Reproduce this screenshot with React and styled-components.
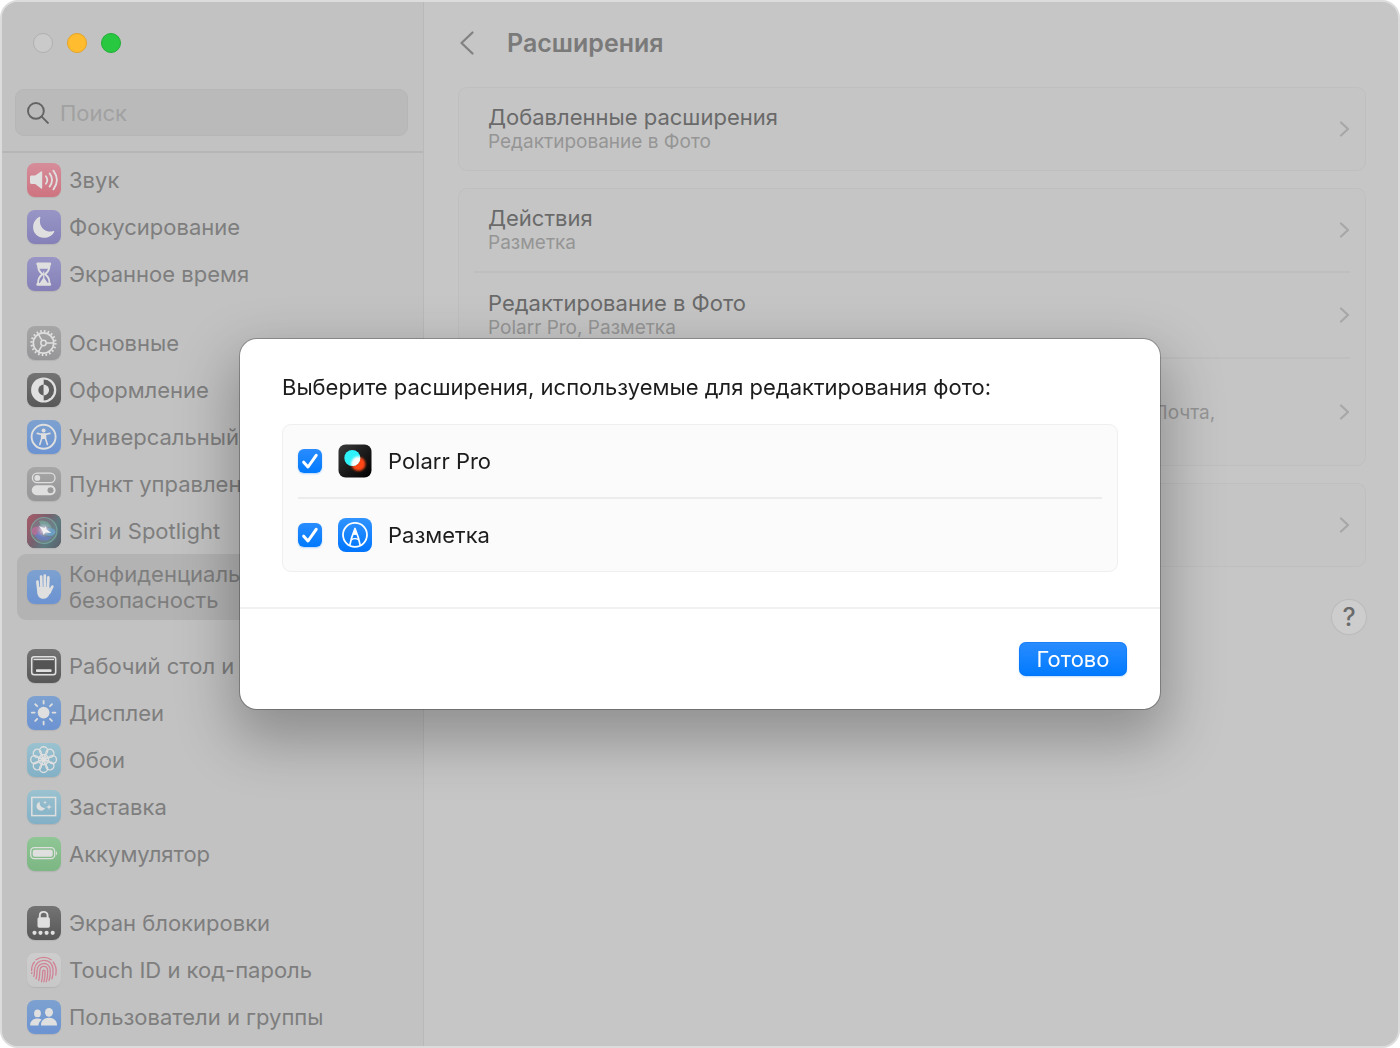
import React, { useState } from "react";
import styled, { createGlobalStyle, css } from "styled-components";

const GlobalStyle = createGlobalStyle`
  *, *::before, *::after { box-sizing: border-box; }
  body {
    margin: 0;
    background: #fff;
    font-family: Inter, "Noto Sans", sans-serif;
    font-size: 22px;
    line-height: 26px;
  }
  button, input { font: inherit; }
  h1, h2, p, ul { margin: 0; padding: 0; }
`;

/* ---------- window ---------- */

const Window = styled.div`
  display: grid;
  grid-template-columns: 422px minmax(0, 1fr);
  min-height: 100vh;
  border: 2px solid #dcdcdc;
  border-radius: 18px;
  background: #c6c6c6;
  overflow: hidden;
`;

const Sidebar = styled.aside`
  display: flex;
  flex-direction: column;
  background: #c2c2c2;
  border-right: 1px solid #b9b9b9;
`;

const SidebarTop = styled.div`
  display: flex;
  flex-direction: column;
  gap: 36px;
  padding: 31px 15px 15px 13px;
  border-bottom: 2px solid #b6b6b6;
`;

const Lights = styled.div`
  display: flex;
  gap: 14px;
  padding-left: 18px;
`;

const Light = styled.button`
  width: 20px;
  height: 20px;
  padding: 0;
  border: 1px solid ${(p) => p.$edge};
  border-radius: 50%;
  background: ${(p) => p.$fill};
`;

const Search = styled.label`
  display: flex;
  align-items: center;
  gap: 11px;
  height: 47px;
  padding: 0 11px;
  border: 1px solid #b6b6b6;
  border-radius: 9px;
  background: #bababa;
`;

const SearchInput = styled.input`
  flex: 1;
  min-width: 0;
  padding: 0;
  border: 0;
  outline: 0;
  background: none;
  color: #6d6d6d;
  &::placeholder { color: #a1a1a1; opacity: 1; }
`;

const Nav = styled.nav`
  display: flex;
  flex-direction: column;
  gap: 22px;
  padding: 3px 15px 6px;
`;

const Group = styled.ul`
  list-style: none;
`;

const Item = styled.button`
  display: flex;
  align-items: center;
  gap: 8px;
  width: 100%;
  min-height: 47px;
  padding: 0 10px;
  border: 0;
  border-radius: 9px;
  background: none;
  color: #7e7e7e;
  text-align: left;
  ${(p) =>
    p.$selected &&
    css`
      min-height: 66px;
      background: #b3b3b3;
    `}
`;

const tones = {
  red: ["#d68d9a", "#cf7380"],
  purple: ["#9895c6", "#8581b8"],
  grey: ["#a6a6a7", "#969698"],
  black: ["#737373", "#585858"],
  blue: ["#7da1d0", "#6c93d2"],
  cyan: ["#9ac2d0", "#82b0c6"],
  green: ["#8fc695", "#7cb683"],
  white: ["#cdcdcd", "#c8c8c8"],
  siri: ["#777", "#555"],
};

const Tile = styled.span`
  display: flex;
  flex: none;
  width: 34px;
  height: 34px;
  border-radius: 8px;
  overflow: hidden;
  background: linear-gradient(${(p) => tones[p.$tone][0]}, ${(p) => tones[p.$tone][1]});
  box-shadow: 0 1px 1px rgba(0, 0, 0, 0.08);
`;

/* ---------- main pane ---------- */

const Main = styled.main`
  display: flex;
  flex-direction: column;
  gap: 17px;
  padding: 23px 32px 34px 34px;
`;

const Header = styled.header`
  display: flex;
  align-items: center;
  gap: 31px;
  height: 36px;
  margin-bottom: 9px;
`;

const Back = styled.button`
  display: flex;
  padding: 0;
  border: 0;
  background: none;
`;

const Title = styled.h1`
  font-size: 25px;
  line-height: 32px;
  font-weight: 600;
  color: #7a7a7a;
`;

const Card = styled.section`
  border: 1px solid #bfbfbf;
  border-radius: 9px;
  background: #c5c5c5;
  padding: 0 15px;
`;

const CardRow = styled.button`
  display: flex;
  align-items: center;
  justify-content: space-between;
  width: 100%;
  min-height: 82px;
  padding: 16px 0 16px 14px;
  border: 0;
  background: none;
  text-align: left;
  & + & {
    border-top: 2px solid #bfbfbf;
    min-height: 86px;
  }
`;

const RowText = styled.span`
  display: flex;
  flex-direction: column;
`;

const RowTitle = styled.span`
  min-height: 26px;
  color: #6a6a6a;
`;

const RowSub = styled.span`
  font-size: 19px;
  line-height: 24px;
  color: #959595;
`;

const Help = styled.button`
  align-self: flex-end;
  width: 34px;
  height: 34px;
  margin-top: 16px;
  padding: 0;
  border: 0;
  border-radius: 50%;
  background: #cdcdcd;
  box-shadow: 0 0 1px 1px rgba(0, 0, 0, 0.06);
  color: #6a6a6a;
  font-size: 25px;
  line-height: 34px;
  font-weight: 500;
`;

/* ---------- dialog ---------- */

const Overlay = styled.div`
  position: fixed;
  inset: 0;
  display: grid;
  place-items: center;
  padding: 24px;
`;

const Dialog = styled.div`
  width: 100%;
  max-width: 920px;
  border-radius: 17px;
  background: #fff;
  box-shadow: 0 0 0 1px rgba(0, 0, 0, 0.26), 0 24px 56px 8px rgba(0, 0, 0, 0.27);
`;

const DialogBody = styled.div`
  display: flex;
  flex-direction: column;
  gap: 24px;
  padding: 35px 42px;
`;

const DialogTitle = styled.h2`
  font-size: 22px;
  line-height: 26px;
  font-weight: 400;
  color: #1d1d1d;
`;

const Options = styled.div`
  border: 1px solid #efefef;
  border-radius: 9px;
  background: #fbfbfb;
  padding: 0 15px;
`;

const Option = styled.label`
  display: flex;
  align-items: center;
  gap: 16px;
  height: 72px;
  color: #1d1d1d;
  & + & {
    height: 74px;
    border-top: 2px solid #ececec;
  }
`;

const CheckBox = styled.span`
  display: grid;
  width: 24px;
  height: 24px;
  & > * { grid-area: 1 / 1; }
`;

const CheckInput = styled.input`
  appearance: none;
  width: 24px;
  height: 24px;
  margin: 0;
  border: 1px solid #c8c8c8;
  border-radius: 6px;
  background: #fff;
  &:checked {
    border: 0;
    background: linear-gradient(#2a8cff, #007aff);
    box-shadow: 0 1px 2px rgba(0, 122, 255, 0.3);
  }
  & + svg { visibility: hidden; pointer-events: none; }
  &:checked + svg { visibility: visible; }
`;

const DialogFooter = styled.div`
  display: flex;
  justify-content: flex-end;
  padding: 33px;
  border-top: 2px solid #f1f1f1;
`;

const Done = styled.button`
  height: 34px;
  width: 108px;
  padding: 0;
  border: 0;
  border-radius: 7px;
  background: linear-gradient(#2a8cff, #007aff);
  box-shadow: inset 0 0 0 1px rgba(0, 110, 240, 0.4), 0 1px 2px rgba(0, 122, 255, 0.25);
  color: #fff;
  line-height: 34px;
`;

/* ---------- drawings ---------- */

const W = "#dfdfdf";
const EIGHTHS = [0, 45, 90, 135, 180, 225, 270, 315];

const Glyph = ({ children }) => (
  <svg width="34" height="34" viewBox="0 0 34 34" fill="none" aria-hidden="true">
    {children}
  </svg>
);

const glyphs = {
  sound: (
    <>
      <path d="M4.6 12.6h3.6L14 8.4c.6-.4 1.2-.1 1.2.6v16c0 .7-.6 1-1.2.6l-5.8-4.7H4.6C3.6 20.9 3 20.3 3 19.3v-5.1c0-1 .6-1.6 1.6-1.6z" fill={W} />
      <path d="M18.9 13.2Q21.7 17 18.9 20.8M22.6 10.4Q27.6 17 22.6 23.600M26.4 7.6Q33.4 17 26.4 26.4" stroke={W} strokeWidth="1.8" strokeLinecap="round" />
    </>
  ),
  moon: (
    <path d="M12.6 6.8c.6-.3 1 .1.8.7-1.3 4.5 0 9.3 3.6 12 2.9 2.1 6.2 2.5 9.4 1.5.7-.2 1.1.3.8.9-2 3.6-5.9 5.900-10.300 5.900C10.900 27.800 6.100 23.200 6.100 17.300c0-4.700 2.600-8.600 6.500-10.500z" fill={W} />
  ),
  hourglass: (
    <>
      <path d="M10.2 5.600h13.100c1.200 0 1.200 2.800 0 2.800H10.200c-1.200 0-1.200-2.800 0-2.800zM10.200 26h13.100c1.200 0 1.200 2.800 0 2.800H10.200c-1.200 0-1.200-2.800 0-2.800z" fill={W} />
      <path d="M11 7.500c0 5.200 1.300 6.900 4.400 9.700-3.100 2.800-4.400 4.500-4.400 9.700M22.500 7.500c0 5.200-1.300 6.900-4.400 9.700 3.100 2.800 4.400 4.500 4.400 9.700" stroke={W} strokeWidth="1.900" />
      <path d="M11 7.500h11.500l-.6 4.300h-10.300zM16.750 20.200l4.400 6.300h-8.800z" fill={W} />
      <path d="M16.750 14.500v7" stroke={W} strokeWidth="1.200" />
    </>
  ),
  gear: (
    <>
      <circle cx="16.5" cy="17" r="10.200" stroke={W} strokeWidth="1.700" />
      <circle cx="16.5" cy="17" r="12" stroke={W} strokeWidth="2.200" strokeDasharray="1.700 2.070" />
      <circle cx="16.5" cy="17" r="2.700" stroke={W} strokeWidth="1.500" />
      <path d="M19.200 17h7M15.100 14.700l-3.600-6.300M15.100 19.300l-3.600 6.300" stroke={W} strokeWidth="1.500" />
    </>
  ),
  appearance: (
    <>
      <circle cx="16.700" cy="17" r="12.600" fill={W} />
      <path d="M16.700 6.600a10.400 10.400 0 0 1 0 20.800z" fill="#5f5f5f" />
      <path d="M16.700 11.600a5.400 5.400 0 0 0 0 10.800z" fill="#5f5f5f" />
      <path d="M16.700 11.600a5.400 5.400 0 0 1 0 10.800z" fill={W} />
    </>
  ),
  access: (
    <>
      <circle cx="16.600" cy="16.800" r="12" stroke={W} strokeWidth="1.900" />
      <circle cx="16.600" cy="10.400" r="2" fill={W} />
      <path d="M10.300 13.400l4.900 1.100h2.800l4.900-1.100" stroke={W} strokeWidth="1.600" strokeLinecap="round" strokeLinejoin="round" />
      <path d="M14.700 14h3.800v4.600l1.900 6M14.700 14v4.600l-1.900 6" stroke={W} strokeWidth="1.600" strokeLinecap="round" strokeLinejoin="round" />
      <path d="M14.700 14h3.800v5h-3.800z" fill={W} />
    </>
  ),
  toggles: (
    <>
      <rect x="5.400" y="6.200" width="22.600" height="9.400" rx="4.700" stroke={W} strokeWidth="1.300" />
      <circle cx="10.300" cy="10.900" r="2.900" fill={W} />
      <rect x="4.800" y="18.200" width="23.800" height="10" rx="5" fill={W} />
      <circle cx="23.500" cy="23.200" r="3" fill="#9a9a9b" />
    </>
  ),
  siri: (
    <>
      <defs>
        <linearGradient id="siriBase" x1="0" y1=".2" x2="1" y2=".8">
          <stop offset="0" stopColor="#a35a68" />
          <stop offset=".4" stopColor="#77606e" />
          <stop offset=".7" stopColor="#5b7a80" />
          <stop offset="1" stopColor="#5c6470" />
        </linearGradient>
        <radialGradient id="siriGlow">
          <stop offset="0" stopColor="#f0f0f0" />
          <stop offset=".35" stopColor="#c9c4d8" stopOpacity=".8" />
          <stop offset="1" stopColor="#8aa4c8" stopOpacity="0" />
        </radialGradient>
      </defs>
      <rect width="34" height="34" fill="url(#siriBase)" />
      <circle cx="17" cy="16.500" r="13" fill="#778a96" fillOpacity=".5" stroke="#7db5a6" strokeOpacity=".7" strokeWidth="1.200" />
      <ellipse cx="10.500" cy="17" rx="6" ry="4.500" fill="#bd6f9b" fillOpacity=".75" />
      <ellipse cx="23" cy="18" rx="5.500" ry="4" fill="#6ba5d0" fillOpacity=".8" />
      <path d="M8 22c5 6 13 6 17 0-5 2-10 1-13-5z" fill="#6a7fd0" fillOpacity=".7" />
      <path d="M12 7c6-2 12 2 13 8-4-3-8-3-10 1z" fill="#74b79d" fillOpacity=".6" />
      <circle cx="17" cy="16" r="8" fill="url(#siriGlow)" />
      <path d="M12 12l5 2 2-1.500.5 3 5 3.500-6-.5-2 2.500-1-4z" fill="#f0f0f0" />
    </>
  ),
  hand: (
    <>
      <path d="M10.400 11.500l.9 8M14.100 6.600l.4 11M17.800 5.500v12M21.400 7.400l-.5 11M25.400 16.600c-1 1.500-1.800 3.800-2.900 6" stroke={W} strokeWidth="2.700" strokeLinecap="round" />
      <path d="M10 17h12.200l1.600 3.600c-1 3.800-2.600 8.200-7.200 8.200-4.200 0-6.100-2.600-6.500-6.800z" fill={W} />
    </>
  ),
  desktop: (
    <>
      <rect x="4.700" y="7.700" width="24" height="18" rx="2.500" stroke={W} strokeWidth="1.500" />
      <path d="M6.500 10.400h20.500" stroke={W} strokeWidth="1.300" />
      <rect x="6.500" y="12" width="20.500" height="12" rx="1" fill="#545454" />
      <rect x="9" y="20.300" width="15.600" height="2.800" rx=".8" fill={W} />
    </>
  ),
  sun: (
    <>
      <circle cx="16.600" cy="16.600" r="5.900" fill={W} />
      {EIGHTHS.map((a) => (
        <path key={a} d="M16.600 4.800v2.800" stroke={W} strokeWidth="1.800" strokeLinecap="round" transform={`rotate(${a} 16.600 16.600)`} />
      ))}
    </>
  ),
  flower: (
    <>
      {EIGHTHS.map((a) => (
        <g key={a} transform={`rotate(${a} 16.600 16.600)`} stroke={W}>
          <circle cx="16.600" cy="7.700" r="4" strokeWidth="1.400" />
          <path d="M15.300 11.700L16.600 16.600l1.300-4.900" strokeWidth="1.100" />
        </g>
      ))}
      <circle cx="16.600" cy="16.600" r="2.300" fill={W} />
    </>
  ),
  saver: (
    <>
      <rect x="4.800" y="7.400" width="23.800" height="18.200" stroke={W} strokeWidth="1.500" />
      <path d="M12.900 11.800c-.9 3.500 1.800 6.700 5.400 6-1 2-2.500 2.900-4.300 2.900-2.500 0-4.500-2-4.500-4.400 0-2 1.300-3.700 3.400-4.500z" fill={W} />
      <path d="M18 10.500l.5 1.500 1.500.5-1.500.5-.5 1.500-.5-1.500-1.500-.5 1.500-.5zM22 14l.7 2.300 2.300.7-2.300.7L22 20l-.7-2.300L19 17l2.300-.7z" fill={W} />
    </>
  ),
  battery: (
    <>
      <rect x="3.700" y="10.700" width="24" height="11" rx="3.600" stroke={W} strokeWidth="1.300" />
      <rect x="5.700" y="12.700" width="20" height="7" rx="2" fill={W} />
      <path d="M29 14.200c1.300.4 1.300 3.600 0 4z" fill={W} />
    </>
  ),
  lock: (
    <>
      <rect x="10.500" y="11.300" width="12.400" height="10.400" rx="1.700" fill={W} />
      <path d="M12.800 12V9.400c0-4.700 7.800-4.700 7.800 0V12" stroke={W} strokeWidth="1.900" />
      {[7.5, 13.5, 19.6, 25.7].map((x) => (
        <circle key={x} cx={x} cy="26.800" r="2.100" fill={W} />
      ))}
    </>
  ),
  touch: (
    <g stroke="#d18295" strokeWidth="1.300" strokeLinecap="round">
      <path d="M9 6.800C13.500 3.600 20 3.600 24.200 6.800M26.200 9c3 3.800 3.500 8 2.600 13" />
      <path d="M4.600 17.500C4.600 13.500 5.600 11 7.500 9M4.600 20.500c.3-.8.3-1 .3-1" />
      <path d="M6.800 23.500c1-2.600.4-5 .8-7.500C9 4.800 24.800 4.200 26 15.800c.3 3.800 0 6.700-1 10" />
      <path d="M9 25.800c1.200-3 .9-5.800 1.100-8.500C10.700 8.500 22.500 8.200 23.200 16.800c.3 4 0 7.200-1.200 10.800" />
      <path d="M11.700 27.500c1.100-3.200 1-6.500 1.100-9.500.3-6.200 7.700-6.200 7.900 0 .1 4-.3 7.500-1.500 10.800" />
      <path d="M14.500 28.800c1-3 1.200-6.500 1.200-10.200 0-2 2.400-2 2.400 0 0 3.800-.2 7-1.200 10.200" />
    </g>
  ),
  users: (
    <>
      <ellipse cx="10.500" cy="13.400" rx="3.400" ry="3.900" fill={W} />
      <path d="M3.200 25.600c-.3-4.300 3-7 7.300-7 1.600 0 3 .4 4.200 1.200-2 1.500-3.100 3.400-3.200 5.800z" fill={W} />
      <ellipse cx="22" cy="12.300" rx="4" ry="4.400" fill={W} />
      <path d="M14 25.600c-.4-4.600 3.200-7.800 8-7.800s8.400 3.200 8 7.800z" fill={W} />
    </>
  ),
};

const SearchIcon = () => (
  <svg width="22" height="22" viewBox="0 0 22 22" fill="none" stroke="#636363" strokeWidth="1.900" strokeLinecap="round" aria-hidden="true">
    <circle cx="8.900" cy="8.900" r="7.900" />
    <path d="M14.700 14.700l6.200 6.200" />
  </svg>
);

const BackIcon = () => (
  <svg width="18" height="26" viewBox="0 0 18 26" fill="none" stroke="#828282" strokeWidth="2.300" strokeLinecap="round" strokeLinejoin="round" aria-hidden="true">
    <path d="M14.500 2.500L3.500 13l11 10.500" />
  </svg>
);

const Chevron = () => (
  <svg width="11" height="16" viewBox="0 0 11 16" fill="none" stroke="#a7a7a7" strokeWidth="2.200" strokeLinecap="round" strokeLinejoin="round" aria-hidden="true">
    <path d="M2 1.500L9 8l-7 6.500" />
  </svg>
);

const CheckMark = () => (
  <svg width="24" height="24" viewBox="0 0 24 24" fill="none" stroke="#fff" strokeWidth="3" strokeLinecap="round" strokeLinejoin="round" aria-hidden="true">
    <path d="M5.700 13.200l4.300 4.800L18.200 6.300" />
  </svg>
);

const PolarrIcon = () => (
  <svg width="34" height="34" viewBox="0 0 34 34" aria-hidden="true">
    <defs>
      <linearGradient id="polarrBase" x1="0" y1="0" x2="1" y2="1">
        <stop offset="0" stopColor="#3a3a3a" />
        <stop offset=".5" stopColor="#1c1c1c" />
        <stop offset="1" stopColor="#000" />
      </linearGradient>
      <filter id="soft" x="-50%" y="-50%" width="200%" height="200%">
        <feGaussianBlur stdDeviation="1.300" />
      </filter>
      <clipPath id="cyanClip"><circle cx="14.300" cy="14" r="8" /></clipPath>
    </defs>
    <rect x=".5" y=".5" width="33" height="33" rx="7" fill="url(#polarrBase)" />
    <circle cx="20.500" cy="20" r="7" fill="#ff4713" filter="url(#soft)" />
    <circle cx="14.300" cy="14" r="8" fill="#2ff3fb" />
    <g clipPath="url(#cyanClip)">
      <circle cx="20.500" cy="20" r="7.500" fill="#fff" filter="url(#soft)" />
    </g>
  </svg>
);

const MarkupIcon = () => (
  <svg width="34" height="34" viewBox="0 0 34 34" fill="none" aria-hidden="true">
    <defs>
      <linearGradient id="markupBase" x1="0" y1="0" x2="0" y2="1">
        <stop offset="0" stopColor="#3093ff" />
        <stop offset="1" stopColor="#0075ff" />
      </linearGradient>
    </defs>
    <rect width="34" height="34" rx="8" fill="url(#markupBase)" />
    <circle cx="17" cy="16.800" r="12" stroke="#fff" strokeWidth="1.800" />
    <path d="M11.800 27.200L13.700 19.500 17 10.500l3.300 9 1.900 7.700" stroke="#fff" strokeWidth="1.700" strokeLinejoin="round" />
    <path d="M17 10l2.200 6.200c-1.200.9-3.200.9-4.400 0z" fill="#fff" />
    <path d="M13.500 21.700c1.500-1.500 5.500-1.500 7 0" stroke="#fff" strokeWidth="1.400" />
  </svg>
);

/* ---------- data ---------- */

const groups = [
  [
    ["sound", "red", "Звук"],
    ["moon", "purple", "Фокусирование"],
    ["hourglass", "purple", "Экранное время"],
  ],
  [
    ["gear", "grey", "Основные"],
    ["appearance", "black", "Оформление"],
    ["access", "blue", "Универсальный доступ"],
    ["toggles", "grey", "Пункт управления"],
    ["siri", "siri", "Siri и Spotlight"],
    ["hand", "blue", "Конфиденциальность и безопасность"],
  ],
  [
    ["desktop", "black", "Рабочий стол и Dock"],
    ["sun", "blue", "Дисплеи"],
    ["flower", "cyan", "Обои"],
    ["saver", "cyan", "Заставка"],
    ["battery", "green", "Аккумулятор"],
  ],
  [
    ["lock", "black", "Экран блокировки"],
    ["touch", "white", "Touch ID и код-пароль"],
    ["users", "blue", "Пользователи и группы"],
  ],
];

const cards = [
  [["Добавленные расширения", "Редактирование в Фото"]],
  [
    ["Действия", "Разметка"],
    ["Редактирование в Фото", "Polarr Pro, Разметка"],
    ["", "Добавить в Фото, Заметки, Напоминания, Сообщения, AirDrop, Видео, Почта,", "Freeform"],
  ],
  [["Finder", "Разметка"]],
];

const extensions = [
  ["polarr", "Polarr Pro", PolarrIcon],
  ["markup", "Разметка", MarkupIcon],
];

export default function App() {
  const [enabled, setEnabled] = useState({ polarr: true, markup: true });
  const [selected, setSelected] = useState("hand");
  const [query, setQuery] = useState("");

  return (
    <>
      <GlobalStyle />
      <Window>
        <Sidebar>
          <SidebarTop>
            <Lights>
              <Light aria-label="Закрыть" $fill="#cacaca" $edge="#b0b0b0" />
              <Light aria-label="Свернуть" $fill="#febc2e" $edge="#e5a326" />
              <Light aria-label="Развернуть" $fill="#28c840" $edge="#1fae35" />
            </Lights>
            <Search>
              <SearchIcon />
              <SearchInput
                type="text"
                aria-label="Поиск"
                placeholder="Поиск"
                value={query}
                onChange={(e) => setQuery(e.target.value)}
              />
            </Search>
          </SidebarTop>
          <Nav>
            {groups.map((items, i) => (
              <Group key={i}>
                {items.map(([id, tone, label]) => (
                  <li key={id}>
                    <Item $selected={selected === id} onClick={() => setSelected(id)}>
                      <Tile $tone={tone}>
                        <Glyph>{glyphs[id]}</Glyph>
                      </Tile>
                      <span>{label}</span>
                    </Item>
                  </li>
                ))}
              </Group>
            ))}
          </Nav>
        </Sidebar>
        <Main>
          <Header>
            <Back aria-label="Назад">
              <BackIcon />
            </Back>
            <Title>Расширения</Title>
          </Header>
          {cards.map((rows, i) => (
            <Card key={i}>
              {rows.map(([title, ...lines]) => (
                <CardRow key={title}>
                  <RowText>
                    <RowTitle>{title}</RowTitle>
                    {lines.map((line) => (
                      <RowSub key={line}>{line}</RowSub>
                    ))}
                  </RowText>
                  <Chevron />
                </CardRow>
              ))}
            </Card>
          ))}
          <Help aria-label="Справка">?</Help>
        </Main>
      </Window>
      <Overlay>
        <Dialog role="dialog" aria-modal="true" aria-labelledby="dialog-title">
          <DialogBody>
            <DialogTitle id="dialog-title">
              Выберите расширения, используемые для редактирования фото:
            </DialogTitle>
            <Options>
              {extensions.map(([id, name, Icon]) => (
                <Option key={id}>
                  <CheckBox>
                    <CheckInput
                      type="checkbox"
                      checked={enabled[id]}
                      onChange={(e) => setEnabled({ ...enabled, [id]: e.target.checked })}
                    />
                    <CheckMark />
                  </CheckBox>
                  <Icon />
                  <span>{name}</span>
                </Option>
              ))}
            </Options>
          </DialogBody>
          <DialogFooter>
            <Done>Готово</Done>
          </DialogFooter>
        </Dialog>
      </Overlay>
    </>
  );
}
